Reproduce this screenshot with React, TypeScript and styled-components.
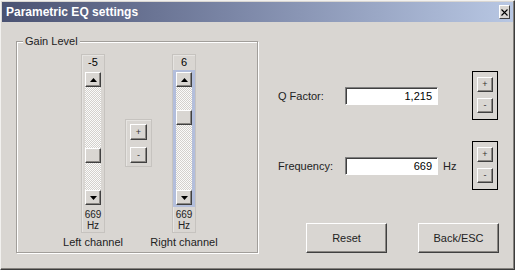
import styled, { createGlobalStyle } from 'styled-components';

const GlobalStyle = createGlobalStyle`
  html, body {
    margin: 0;
    padding: 0;
    background: #d9d6d2;
  }
  body {
    font-family: "Liberation Sans", Arial, sans-serif;
    font-size: 11px;
    color: #000;
  }
`;

const FACE = '#d9d6d2';

const Window = styled.div`
  width: 515px;
  height: 270px;
  box-sizing: border-box;
  border: 1px solid;
  border-color: #f2f1ef #3c3c3c #3c3c3c #f2f1ef;
  box-shadow: inset -1px -1px 0 #85827e;
  padding: 1px;
  background: ${FACE};
  display: flex;
  flex-direction: column;
`;

const TitleBar = styled.div`
  height: 20px;
  flex-shrink: 0;
  display: flex;
  align-items: center;
  justify-content: space-between;
  padding: 0 3px 0 4px;
  background: linear-gradient(to right, #4a5272, #7b86a6 45%, #b8c7e3);
  color: #fff;
  font-weight: bold;
  font-size: 12px;
`;

const CloseButton = styled.div`
  width: 11px;
  height: 14px;
  box-sizing: border-box;
  background: ${FACE};
  border: 1px solid;
  border-color: #fff #404040 #404040 #fff;
  display: flex;
  align-items: center;
  justify-content: center;
`;

const Body = styled.div`
  flex: 1;
  display: flex;
  align-items: flex-start;
  padding: 19px 0 0 14px;
`;

const Group = styled.div`
  position: relative;
  width: 242px;
  height: 212px;
  box-sizing: border-box;
  border: 1px solid #a19e9a;
  box-shadow: 1px 1px 0 #fff, inset 1px 1px 0 #fff;
  display: flex;
  align-items: flex-start;
  padding: 12px 0 0 64px;
  gap: 20px;
`;

const Legend = styled.span`
  position: absolute;
  top: -7px;
  left: 6px;
  padding: 0 2px;
  line-height: 13px;
  background: ${FACE};
  color: #222;
`;

const Channel = styled.div`
  display: flex;
  flex-direction: column;
  align-items: center;
  width: 24px;
`;

const SliderColumn = styled.div`
  width: 24px;
  height: 179px;
  box-sizing: border-box;
  border: 1px solid #c6c3bf;
  box-shadow: inset 1px 1px 0 #e6e4e1;
  display: flex;
  flex-direction: column;
`;

const ValueLabel = styled.div`
  height: 15px;
  line-height: 15px;
  text-align: center;
  font-size: 11px;
`;

const TrackFrame = styled.div<{ $focused: boolean }>`
  height: 137px;
  box-sizing: border-box;
  padding: 2px 3px;
  background: ${p => (p.$focused ? '#b3bedb' : 'transparent')};
`;

const Track = styled.div`
  position: relative;
  height: 133px;
  width: 16px;
  display: flex;
  flex-direction: column;
  justify-content: space-between;
  background: repeating-conic-gradient(#fbfbfa 0 25%, #d4d1cd 0 50%) 0 0 / 2px 2px;
`;

const Raised = styled.div`
  box-sizing: border-box;
  background: ${FACE};
  border: 1px solid;
  border-color: #fff #404040 #404040 #fff;
  box-shadow: inset -1px -1px 0 #8a8783;
  display: flex;
  align-items: center;
  justify-content: center;
`;

const ScrollButton = styled(Raised)`
  width: 16px;
  height: 15px;
`;

const Thumb = styled(Raised)`
  position: absolute;
  left: 0;
  width: 16px;
  height: 15px;
`;

const FreqLabel = styled.div`
  padding-top: 2px;
  font-size: 10px;
  line-height: 11px;
  text-align: center;
  color: #222;
`;

const ChannelName = styled.div`
  margin-top: 3px;
  white-space: nowrap;
  line-height: 13px;
  color: #222;
`;

const StepBox = styled.div`
  margin-top: 65px;
  width: 27px;
  height: 48px;
  box-sizing: border-box;
  border: 1px solid #c6c3bf;
  box-shadow: inset 1px 1px 0 #e6e4e1;
  display: flex;
  flex-direction: column;
  align-items: center;
  gap: 7px;
  padding-top: 4px;
`;

const StepButton = styled(Raised)`
  width: 17px;
  height: 16px;
  font-size: 9px;
  line-height: 1;
  color: #333;
`;

const RightPanel = styled.div`
  margin-left: 20px;
  width: 221px;
  display: flex;
  flex-direction: column;
  padding-top: 30px;
`;

const ParamRow = styled.div<{ $gap: number }>`
  display: grid;
  grid-template-columns: 67px 93px 34px 26px;
  align-items: center;
  height: 49px;
  margin-bottom: ${p => p.$gap}px;
`;

const FieldLabel = styled.div`
  color: #222;
`;

const Input = styled.div`
  height: 18px;
  box-sizing: border-box;
  background: #fff;
  border: 1px solid;
  border-color: #808080 #fff #fff #808080;
  box-shadow: inset 1px 1px 0 #404040;
  text-align: right;
  padding-right: 5px;
  line-height: 16px;
`;

const Unit = styled.div`
  padding-left: 5px;
  color: #222;
`;

const StepFrame = styled.div`
  width: 26px;
  height: 49px;
  box-sizing: border-box;
  border: 1px solid #000;
  display: flex;
  flex-direction: column;
  align-items: center;
  gap: 6px;
  padding-top: 5px;
`;

const SmallStep = styled(Raised)`
  width: 16px;
  height: 15px;
  font-size: 9px;
  line-height: 1;
  color: #333;
`;

const ButtonRow = styled.div`
  margin-top: 33px;
  display: flex;
  justify-content: flex-end;
  gap: 31px;
`;

const PushButton = styled(Raised)`
  width: 81px;
  height: 30px;
  font-size: 11px;
  color: #222;
`;

const Arrow = ({ down }: { down?: boolean }) => (
  <svg width="7" height="4" viewBox="0 0 7 4">
    <polygon points={down ? '0,0 7,0 3.5,4' : '0,4 7,4 3.5,0'} fill="#000" />
  </svg>
);

const channels = [
  { name: 'Left channel', gain: -5, focused: false },
  { name: 'Right channel', gain: 6, focused: true },
];

// gain range -12..+12, top of the track is +12
const thumbTop = (gain: number) => 17 + ((12 - gain) / 24) * 83;

const SliderChannel = ({ name, gain, focused }: { name: string; gain: number; focused: boolean }) => (
  <Channel>
    <SliderColumn>
      <ValueLabel>{gain}</ValueLabel>
      <TrackFrame $focused={focused}>
        <Track>
          <ScrollButton><Arrow /></ScrollButton>
          <Thumb style={{ top: thumbTop(gain) }} />
          <ScrollButton><Arrow down /></ScrollButton>
        </Track>
      </TrackFrame>
      <FreqLabel>669<br />Hz</FreqLabel>
    </SliderColumn>
    <ChannelName>{name}</ChannelName>
  </Channel>
);

const Stepper = () => (
  <StepFrame>
    <SmallStep>+</SmallStep>
    <SmallStep>-</SmallStep>
  </StepFrame>
);

const App = () => {
  return (
    <>
      <GlobalStyle />
      <Window>
        <TitleBar>
          <span>Parametric EQ settings</span>
          <CloseButton>
            <svg width="7" height="7" viewBox="0 0 7 7">
              <path d="M0.5 0.5 L6.5 6.5 M6.5 0.5 L0.5 6.5" stroke="#000" strokeWidth="1.1" />
            </svg>
          </CloseButton>
        </TitleBar>
        <Body>
          <Group>
            <Legend>Gain Level</Legend>
            <SliderChannel {...channels[0]} />
            <StepBox>
              <StepButton>+</StepButton>
              <StepButton>-</StepButton>
            </StepBox>
            <SliderChannel {...channels[1]} />
          </Group>
          <RightPanel>
            <ParamRow $gap={21}>
              <FieldLabel>Q Factor:</FieldLabel>
              <Input>1,215</Input>
              <Unit />
              <Stepper />
            </ParamRow>
            <ParamRow $gap={0}>
              <FieldLabel>Frequency:</FieldLabel>
              <Input>669</Input>
              <Unit>Hz</Unit>
              <Stepper />
            </ParamRow>
            <ButtonRow>
              <PushButton>Reset</PushButton>
              <PushButton>Back/ESC</PushButton>
            </ButtonRow>
          </RightPanel>
        </Body>
      </Window>
    </>
  );
};

export default App;
